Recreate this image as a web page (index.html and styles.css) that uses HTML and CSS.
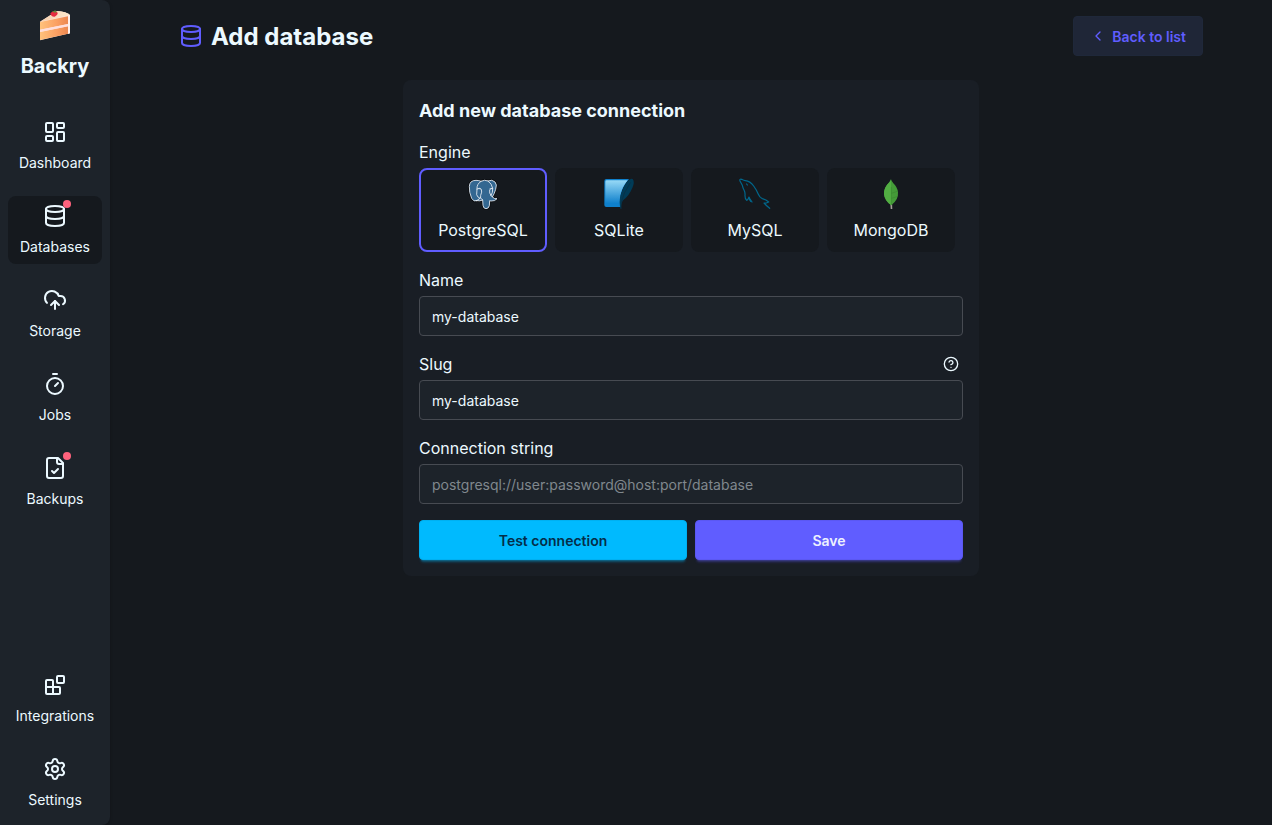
FILE: index.html
```html
<!DOCTYPE html>
<html lang="en">
<head>
<meta charset="utf-8">
<title>Backry</title>
<link rel="stylesheet" href="styles.css">
</head>
<body>
<aside class="sidebar">
  <div class="brand">
    <svg class="cake" viewBox="0 0 96 96">
      <defs>
        <linearGradient id="sponge" x1="0" x2="1"><stop offset="0" stop-color="#ffc27c"/><stop offset=".6" stop-color="#fba062"/><stop offset="1" stop-color="#ed874f"/></linearGradient>
        <linearGradient id="icing" x1="0" x2="1"><stop offset="0" stop-color="#f4cfae"/><stop offset="1" stop-color="#ffe9cc"/></linearGradient>
      </defs>
      <path d="M3 38 54 6Q82 8 93 18V73L3 94Z" fill="#ffe4dc"/>
      <path d="M3 38 54 6Q82 8 93 18Z" fill="url(#icing)"/>
      <path d="M3 39 87 22V45L3 62Z" fill="url(#sponge)"/>
      <path d="M3 69 87 52V74L3 93Z" fill="url(#sponge)"/>
      <path d="M3 62 87 45V52L3 69Z" fill="#ffdedb"/>
      <path d="M87 20 93 18V73L87 75Z" fill="#fff0eb"/>
      <path d="M34 13Q44 3 55 10 59 17 47 23 36 24 34 13Z" fill="#e62d40"/>
      <path d="M37 5 44 7 49 3 50 7 55 9 47 11Z" fill="#658a3b"/>
    </svg>
    <span>Backry</span>
  </div>
  <nav class="menu">
    <a class="item"><svg class="icon" viewBox="0 0 24 24"><rect width="7" height="9" x="3" y="3" rx="1"/><rect width="7" height="5" x="14" y="3" rx="1"/><rect width="7" height="9" x="14" y="12" rx="1"/><rect width="7" height="5" x="3" y="16" rx="1"/></svg>Dashboard</a>
    <a class="item active"><span class="indicator"><svg class="icon" viewBox="0 0 24 24"><ellipse cx="12" cy="5" rx="9" ry="3"/><path d="M3 5v14a9 3 0 0 0 18 0V5"/><path d="M3 12a9 3 0 0 0 18 0"/></svg><i class="dot"></i></span>Databases</a>
    <a class="item"><svg class="icon" viewBox="0 0 24 24"><path d="M12 13v8M4 14.899A7 7 0 1 1 15.71 8h1.79a4.5 4.5 0 0 1 2.5 8.242"/><path d="m8 17 4-4 4 4"/></svg>Storage</a>
    <a class="item"><svg class="icon" viewBox="0 0 24 24"><path d="M10 2h4M12 14l3-3"/><circle cx="12" cy="14" r="8"/></svg>Jobs</a>
    <a class="item"><span class="indicator"><svg class="icon" viewBox="0 0 24 24"><path d="M15 2H6a2 2 0 0 0-2 2v16a2 2 0 0 0 2 2h12a2 2 0 0 0 2-2V7Z"/><path d="M14 2v4a2 2 0 0 0 2 2h4M9 15l2 2 4-4"/></svg><i class="dot"></i></span>Backups</a>
  </nav>
  <nav class="menu bottom">
    <a class="item"><svg class="icon" viewBox="0 0 24 24"><rect width="7" height="7" x="14" y="3" rx="1"/><path d="M10 21V8a1 1 0 0 0-1-1H4a1 1 0 0 0-1 1v12a1 1 0 0 0 1 1h12a1 1 0 0 0 1-1v-5a1 1 0 0 0-1-1H3"/></svg>Integrations</a>
    <a class="item"><svg class="icon" viewBox="0 0 24 24"><path d="M9.671 4.136a2.34 2.34 0 0 1 4.659 0 2.34 2.34 0 0 0 3.319 1.915 2.34 2.34 0 0 1 2.33 4.033 2.34 2.34 0 0 0 0 3.831 2.34 2.34 0 0 1-2.33 4.033 2.34 2.34 0 0 0-3.319 1.915 2.34 2.34 0 0 1-4.659 0 2.34 2.34 0 0 0-3.32-1.915 2.34 2.34 0 0 1-2.33-4.033 2.34 2.34 0 0 0 0-3.831A2.34 2.34 0 0 1 6.35 6.051a2.34 2.34 0 0 0 3.319-1.915"/><circle cx="12" cy="12" r="3"/></svg>Settings</a>
  </nav>
</aside>
<main class="main">
  <header class="header">
    <h1 class="title"><svg class="icon primary" viewBox="0 0 24 24"><ellipse cx="12" cy="5" rx="9" ry="3"/><path d="M3 5v14a9 3 0 0 0 18 0V5"/><path d="M3 12a9 3 0 0 0 18 0"/></svg><span class="caption">Add database</span></h1>
    <a class="btn back"><svg class="icon small" viewBox="0 0 24 24"><path d="m15 18-6-6 6-6"/></svg><span class="caption">Back to list</span></a>
  </header>
  <section class="card">
    <h2 class="card-title">Add new database connection</h2>
    <div class="label">Engine</div>
    <div class="engines">
      <div class="engine selected">
        <svg class="logo" viewBox="0 0 96 96">
          <path d="M29 68Q20 73 14 61 6 43 7 25 8 7 27 7 36 7 42 10 53 4 63 9 75 3 84 12 91 19 86 34 82 48 76 57 83 64 90 62 84 70 72 69L68 68 67 83Q65 92 57 92 49 92 48 82L47 66Q39 70 29 68Z" fill="#336791" stroke="#0b0d10" stroke-width="7" stroke-linejoin="round"/>
          <g fill="#336791" stroke="#e8eef4" stroke-width="2.6" stroke-linejoin="round" stroke-linecap="round">
            <path d="M29 68Q20 73 14 61 6 43 7 25 8 7 27 7 36 7 42 10 53 4 63 9 75 3 84 12 91 19 86 34 82 48 76 57 83 64 90 62 84 70 72 69L68 68 67 83Q65 92 57 92 49 92 48 82L47 66Q39 70 29 68Z"/>
            <path fill="none" d="M42 10Q29 18 30 33L29 50Q31 58 39 61M39 61 29 68M30 33Q38 28 43 34 46 42 41 52 37 61 47 66M63 9Q75 17 77 31 78 43 72 53L76 57M77 31Q70 30 68 36 66 45 72 53"/>
            <path stroke-width="2" d="M36 32h4M69 32h4"/>
          </g>
        </svg>
        PostgreSQL
      </div>
      <div class="engine">
        <svg class="logo" viewBox="0 0 96 96">
          <defs><linearGradient id="sqlite" x1="0" y1="0" x2="0" y2="1"><stop offset="0" stop-color="#97d9f6"/><stop offset=".92" stop-color="#0f80cc"/></linearGradient></defs>
          <path d="M10 3H78Q58 27 53 52 50 70 53 87H10Q4 87 4 81V9Q4 3 10 3Z" fill="#0f80cc"/>
          <path d="M11 7H74Q56 29 52 52 49 68 51 82H11Q7 82 7 79V11Q7 7 11 7Z" fill="url(#sqlite)"/>
          <path d="M53 93Q47 72 53 50 60 27 73 10 82 0 89 3 96 11 88 30 77 55 61 66 54 74 55 93Z" fill="#003b57"/>
          <path d="M54 76Q61 43 83 13" fill="none" stroke="#0c2c40" stroke-width="2"/>
        </svg>
        SQLite
      </div>
      <div class="engine">
        <svg class="logo" viewBox="0 0 96 96">
          <g fill="none" stroke="#00678c" stroke-width="3.6" stroke-linecap="round" stroke-linejoin="round">
            <path d="M35 70Q31 66 30 57 27 66 23 67 18 63 18 53 19 43 15 36 12 31 10 22L3 9Q1 2 8 4 15 8 19 8 33 9 44 24 53 36 58 49 62 59 70 62 82 65 89 72L82 75 75 75Q83 84 92 91"/>
            <path d="M31 60 39 72"/>
            <path d="M23 18 25 21"/>
          </g>
        </svg>
        MySQL
      </div>
      <div class="engine">
        <svg class="logo" viewBox="0 0 96 96">
          <path d="M46 75h5l1 18h-5Z" fill="#a6a09b"/>
          <path d="M48 4Q50 11 55 16 67 27 69 43 71 65 49 82 29 69 27 49 26 29 41 15 46 11 48 4Z" fill="#449b38"/>
          <path d="M48 4Q46 11 41 15 26 29 27 49 29 69 49 82Z" fill="#52ae43"/>
          <path d="M49 27V81M49 46l18-6M49 61l17-5" fill="none" stroke="#39822e" stroke-width="1.5"/>
        </svg>
        MongoDB
      </div>
    </div>
    <label class="label">Name</label>
    <input class="input" value="my-database">
    <div class="label row">Slug<svg class="icon small" viewBox="0 0 24 24"><circle cx="12" cy="12" r="10"/><path d="M9.09 9a3 3 0 0 1 5.83 1c0 2-3 3-3 3M12 17h.01"/></svg></div>
    <input class="input" value="my-database">
    <label class="label">Connection string</label>
    <input class="input" placeholder="postgresql://user:password@host:port/database">
    <div class="actions">
      <button class="btn test"><span class="caption">Test connection</span></button>
      <button class="btn save"><span class="caption">Save</span></button>
    </div>
  </section>
</main>
</body>
</html>
```
FILE: styles.css
```css
* { box-sizing: border-box; }
body {
  margin: 0;
  height: 100vh;
  display: flex;
  overflow: hidden;
  background: #15191e;
  color: #ecf9ff;
  font: 16px/24px Inter, sans-serif;
}
.icon {
  width: 24px;
  height: 24px;
  display: block;
  flex: none;
  fill: none;
  stroke: currentColor;
  stroke-width: 2;
  stroke-linecap: round;
  stroke-linejoin: round;
}
.icon.small { width: 16px; height: 16px; }
.icon.primary { color: #605dff; }
.sidebar {
  width: 110px;
  flex: none;
  display: flex;
  flex-direction: column;
  padding: 8px;
  background: #1d232a;
  border-radius: 0 8px 8px 0;
  box-shadow: 0 1px 3px rgba(0, 0, 0, .25);
}
.brand {
  height: 104px;
  display: flex;
  flex-direction: column;
  align-items: center;
  gap: 8px;
  font-size: 20px;
  font-weight: 700;
  line-height: 28px;
}
.cake { width: 32px; height: 32px; margin-top: 1px; margin-bottom: 3px; }
.menu { display: flex; flex-direction: column; gap: 16px; }
.bottom { margin-top: auto; }
.item {
  height: 68px;
  padding: 8px 0 7px;
  display: flex;
  flex-direction: column;
  align-items: center;
  gap: 9px;
  border-radius: 8px;
  font-size: 14px;
  line-height: 20px;
}
.active { background: #15191e; }
.indicator { position: relative; }
.dot {
  position: absolute;
  top: -4px;
  right: -4px;
  width: 8px;
  height: 8px;
  border-radius: 50%;
  background: #ff627d;
}
.main { flex: 1; }
.header {
  width: 1024px;
  height: 40px;
  margin: 16px auto 24px;
  display: flex;
  align-items: center;
  justify-content: space-between;
}
.title {
  margin: 0;
  display: flex;
  align-items: center;
  gap: 8px;
  font-size: 24px;
  line-height: 32px;
  font-weight: 700;
}
.caption { padding-top: 2px; }
.btn {
  height: 40px;
  padding: 0 16px;
  display: flex;
  align-items: center;
  justify-content: center;
  gap: 6px;
  border: 1px solid transparent;
  border-radius: 4px;
  font: 600 14px/20px Inter, sans-serif;
}
.back { color: #605dff; background: #1f2637; border-color: #1f283a; }
.card {
  width: 576px;
  margin: 0 auto;
  padding: 16px;
  background: #191e25;
  border-radius: 8px;
}
.card-title { margin: 0 0 15px; padding-top: 1px; font-size: 18px; line-height: 28px; font-weight: 700; }
.label { display: block; margin-bottom: 4px; }
.row { display: flex; align-items: center; justify-content: space-between; padding-right: 4px; }
.engines { display: flex; gap: 8px; margin-bottom: 16px; }
.engine {
  width: 128px;
  height: 84px;
  padding: 8px;
  display: flex;
  flex-direction: column;
  align-items: center;
  gap: 8px;
  border: 2px solid transparent;
  border-radius: 8px;
  background: #15191e;
}
.selected { border-color: #605dff; }
.logo { width: 32px; height: 32px; flex: none; }
.input {
  display: block;
  width: 100%;
  height: 40px;
  margin: 0 0 16px;
  padding: 0 12px;
  border: 1px solid #474b52;
  border-radius: 4px;
  background: #1d232a;
  color: #ecf9ff;
  font: 14px/20px Inter, sans-serif;
  outline: none;
}
.input::placeholder { color: #80888e; opacity: 1; }
.actions { display: flex; gap: 8px; }
.actions .btn { flex: 1; }
.test { background: #00bafe; color: #042e49; box-shadow: 0 3px 2px -2px rgba(0, 186, 254, .3), 0 4px 3px -2px rgba(0, 186, 254, .3); border-color: #00b0f1; }
.save { background: #605dff; color: #edf1fe; box-shadow: 0 3px 2px -2px rgba(96, 93, 255, .3), 0 4px 3px -2px rgba(96, 93, 255, .3); border-color: #5b58f2; }
```
